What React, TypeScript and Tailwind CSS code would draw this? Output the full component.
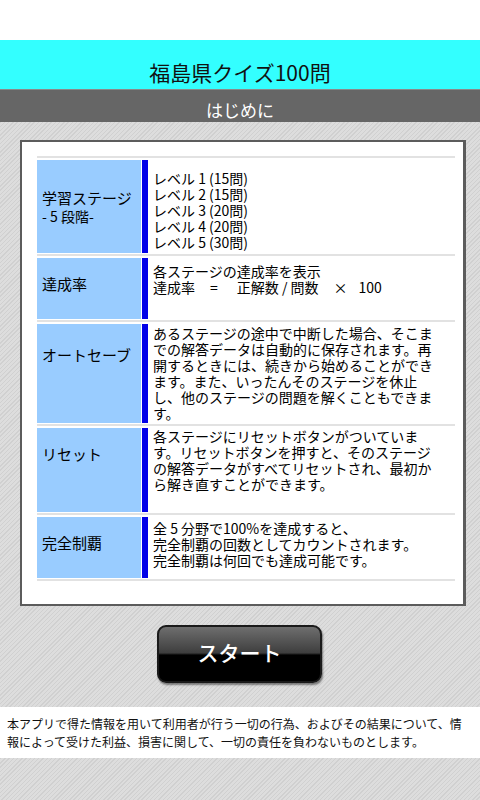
import React from 'react';

interface Row {
  label: React.ReactNode;
  body: React.ReactNode;
  height: string;
  labelPad: string;
  bodyPad: string;
}

const rows: Row[] = [
  {
    label: (
      <>
        <div>学習ステージ</div>
        <div className="text-[14px]">- 5 段階-</div>
      </>
    ),
    body: (
      <>
        <div>レベル 1 (15問)</div>
        <div>レベル 2 (15問)</div>
        <div>レベル 3 (20問)</div>
        <div>レベル 4 (20問)</div>
        <div>レベル 5 (30問)</div>
      </>
    ),
    height: 'h-[93px]',
    labelPad: 'pt-[28px]',
    bodyPad: 'pt-[10px]',
  },
  {
    label: <div>達成率</div>,
    body: (
      <>
        <div>各ステージの達成率を表示</div>
        <div className="whitespace-nowrap">
          <span>達成率</span>
          <span className="ml-[15px]">=</span>
          <span className="ml-[19px]">正解数 / 問数</span>
          <span className="ml-[15px]">×</span>
          <span className="ml-[11px]">100</span>
        </div>
      </>
    ),
    height: 'h-[61px]',
    labelPad: 'pt-[16px]',
    bodyPad: 'pt-[5px]',
  },
  {
    label: <div>オートセーブ</div>,
    body: (
      <>
        <div>あるステージの途中で中断した場合、そこま</div>
        <div>での解答データは自動的に保存されます。再</div>
        <div>開するときには、続きから始めることができ</div>
        <div>ます。また、いったんそのステージを休止</div>
        <div>し、他のステージの問題を解くこともできま</div>
        <div>す。</div>
      </>
    ),
    height: 'h-[99px]',
    labelPad: 'pt-[21px]',
    bodyPad: 'pt-[1px]',
  },
  {
    label: <div>リセット</div>,
    body: (
      <>
        <div>各ステージにリセットボタンがついていま</div>
        <div>す。リセットボタンを押すと、そのステージ</div>
        <div>の解答データがすべてリセットされ、最初か</div>
        <div>ら解き直すことができます。</div>
      </>
    ),
    height: 'h-[84px]',
    labelPad: 'pt-[16px]',
    bodyPad: 'pt-[0px]',
  },
  {
    label: <div>完全制覇</div>,
    body: (
      <>
        <div>全 5 分野で100%を達成すると、</div>
        <div>完全制覇の回数としてカウントされます。</div>
        <div>完全制覇は何回でも達成可能です。</div>
      </>
    ),
    height: 'h-[61px]',
    labelPad: 'pt-[16px]',
    bodyPad: 'pt-[3px]',
  },
];

const Divider = () => <div className="h-[2px] bg-[#e2e2e2] w-full" />;

export default function App() {
  return (
    <div className="w-[480px] min-h-[800px] flex flex-col bg-white text-black font-['Noto_Sans_CJK_JP',sans-serif]">
      <div className="h-[40px] bg-white" />

      <div className="h-[49px] bg-[#33ffff] flex items-end justify-center pb-[4px]">
        <h1 className="text-[21px] leading-[26px] text-[#111]">福島県クイズ100問</h1>
      </div>

      <div className="h-[33px] bg-[#666666] border-t border-[#8a8a8a] flex items-end justify-center pb-[1px]">
        <h2 className="text-[17px] leading-[22px] text-white">はじめに</h2>
      </div>

      <div className="flex-1 flex flex-col bg-[repeating-linear-gradient(135deg,#d0d0d0_0px,#d0d0d0_1px,#dddddd_1px,#dddddd_3px)]">
        <div className="mt-[18px] ml-[20px] w-[446px] h-[466px] bg-white border-2 border-[#5c5c5c] border-r-[3px] pt-[14px] pl-[15px]">
          <div className="w-[418px] flex flex-col">
            <Divider />
            {rows.map((row, i) => (
              <div key={i}>
                <div className={`flex mt-[2px] mb-[1px] ${row.height}`}>
                  <div className={`w-[104px] bg-[#99ccff] pl-[5px] text-[15px] leading-[19px] ${row.labelPad}`}>
                    {row.label}
                  </div>
                  <div className="w-[1px]" />
                  <div className="w-[6px] bg-[#0000e8]" />
                  <div className={`flex-1 pl-[5px] text-[14px] leading-[16px] whitespace-nowrap ${row.bodyPad}`}>
                    {row.body}
                  </div>
                </div>
                <Divider />
              </div>
            ))}
          </div>
        </div>

        <button className="mt-[19px] ml-[157px] w-[165px] h-[58px] pb-[4px] rounded-[9px] border-2 border-[#1a1a1a] shadow-[1px_2px_2px_rgba(0,0,0,0.45)] bg-[linear-gradient(to_bottom,#6e6e6e_0%,#3e3e3e_48%,#000000_52%,#000000_100%)] text-white text-[21px] font-medium leading-[26px]">
          スタート
        </button>

        <div className="mt-[24px] bg-white h-[51px] px-[7px] pt-[8px] text-[12px] leading-[18px] text-[#111]">
          本アプリで得た情報を用いて利用者が行う一切の行為、およびその結果について、情報によって受けた利益、損害に関して、一切の責任を負わないものとします。
        </div>
      </div>
    </div>
  );
}
